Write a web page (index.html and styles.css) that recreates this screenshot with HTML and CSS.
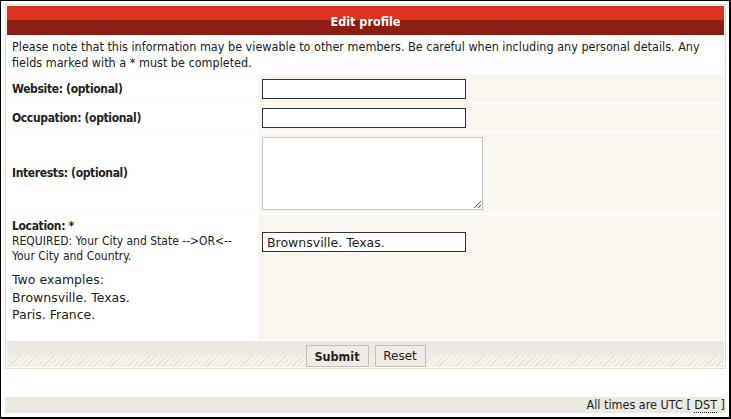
FILE: index.html
```html
<!DOCTYPE html>
<html lang="en">
<head>
<meta charset="utf-8">
<title>Edit profile</title>
<link rel="stylesheet" href="styles.css">
</head>
<body>
<div class="frame">
  <form class="panel">
    <div class="head">Edit profile</div>
    <div class="intro">Please note that this information may be viewable to other members. Be careful when including any personal details. Any fields marked with a * must be completed.</div>
    <div class="row">
      <div class="label"><b>Website: (optional)</b></div>
      <div class="field"><input class="text" type="text"></div>
    </div>
    <div class="row">
      <div class="label"><b>Occupation: (optional)</b></div>
      <div class="field"><input class="text" type="text"></div>
    </div>
    <div class="row">
      <div class="label"><b>Interests: (optional)</b></div>
      <div class="field"><textarea class="area"></textarea></div>
    </div>
    <div class="row loc">
      <div class="label">
        <div class="req"><b>Location: *</b><br>REQUIRED: Your City and State --&gt;OR&lt;--<br>Your City and Country.</div>
        <div class="examples">Two examples:<br>Brownsville. Texas.<br>Paris. France.</div>
      </div>
      <div class="field top"><input class="text" type="text" value="Brownsville. Texas."></div>
    </div>
    <div class="foot">
      <button type="button" class="btn main">Submit</button>
      <button type="button" class="btn">Reset</button>
    </div>
  </form>
  <div class="bottombar">All times are UTC [ <abbr title="Daylight Saving Time">DST</abbr> ]</div>
</div>
</body>
</html>
```

FILE: styles.css
```css
* { box-sizing: border-box; }
html, body { margin: 0; padding: 0; background: #fff; }
body {
  font-family: "DejaVu Sans Condensed", "DejaVu Sans", sans-serif;
  font-size: 12px;
  color: #222;
}
.frame {
  width: 731px;
  height: 419px;
  border-style: solid;
  border-color: #000;
  border-width: 1px 2px 2px 1px;
  padding: 3px 2px 0 4px;
}
.panel {
  margin: 0;
  border: 1px solid #e2dfd5;
  padding: 1px;
  width: 721px;
  display: grid;
  row-gap: 2px;
  background: #fdfcf9;
}
.head {
  height: 29px;
  background: linear-gradient(#dc3220 0 14px, #8c1e11 14px);
  color: #fff;
  font-weight: bold;
  font-size: 12.5px;
  text-align: center;
  line-height: 29px;
  padding-top: 1px;
}
.intro {
  background: #fff;
  padding: 4px 5px 2px;
  line-height: 16px;
  font-size: 12.5px;
  margin-top: -2px;
}
.row {
  display: grid;
  grid-template-columns: 251px 1fr;
}
.label {
  background: #fff;
  padding: 0 5px;
  align-self: stretch;
  display: flex;
  flex-direction: column;
  justify-content: center;
}
.label b { letter-spacing: -0.35px; }
.field {
  background: #f8f6ef;
  padding: 4px 4px 3px;
  display: flex;
  align-items: center;
}
.field.top { align-items: flex-start; padding-top: 17px; }
.loc .label { justify-content: flex-start; padding-top: 4px; height: 125px; }
.req { line-height: 15px; }
.examples {
  margin-top: 7px;
  line-height: 17.5px;
  font-family: "DejaVu Sans", sans-serif;
  font-size: 12.5px;
}
.text {
  width: 204px;
  height: 20px;
  border: 1px solid #333;
  background: #fff;
  font: 12.5px "DejaVu Sans", sans-serif;
  color: #222;
  padding: 1px 4px 0;
  margin: 0;
}
.area {
  width: 221px;
  height: 73px;
  border: 1px solid #c4c4c4;
  background: #fff;
  margin: 0;
  resize: both;
}
.foot {
  margin-top: -1px;
  height: 26px;
  background:
    linear-gradient(#ece9e0, #ece9e0) top / 100% 14px no-repeat,
    repeating-linear-gradient(135deg, #f4f2eb 0 3px, #e4e1d7 3px 4px);
  display: flex;
  justify-content: center;
  align-items: flex-end;
  gap: 6px;
}
.btn {
  height: 22px;
  background: #eeebe3;
  border: 1px solid #c2c0b8;
  border-radius: 0;
  font: 12px "DejaVu Sans", sans-serif;
  color: #222;
  padding: 0;
  margin: 0;
}
.btn.main {
  font: bold 12.5px "DejaVu Sans Condensed", "DejaVu Sans", sans-serif;
  width: 63px;
}
.btn:not(.main) { width: 51px; }
.bottombar {
  margin-top: 28px;
  height: 16px;
  width: 721px;
  background: #ece9e0;
  text-align: right;
  line-height: 16px;
  font-size: 12.5px;
  padding-right: 1px;
  color: #222;
}
abbr {
  text-decoration: none;
  border-bottom: 1px dotted #222;
}
```
